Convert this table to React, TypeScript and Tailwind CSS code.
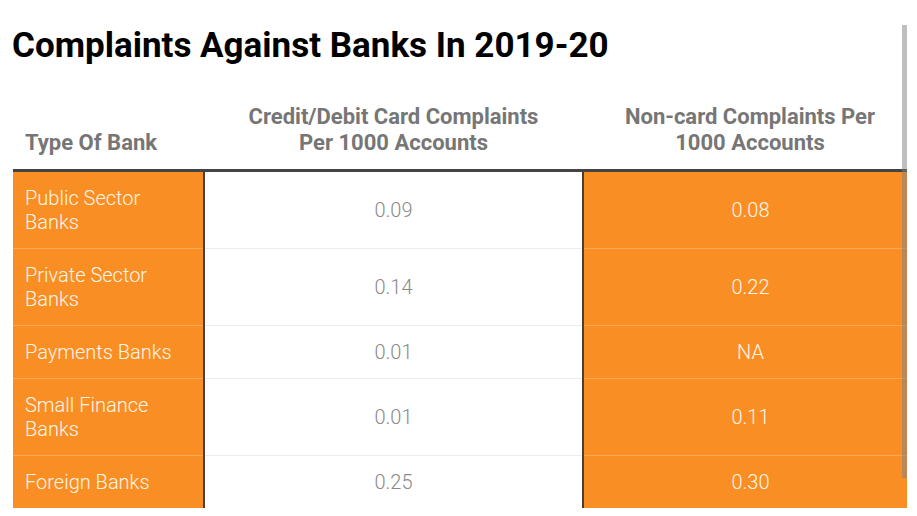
import React from 'react';

const ROWS = [
  { bank: 'Public Sector Banks', card: '0.09', nonCard: '0.08' },
  { bank: 'Private Sector Banks', card: '0.14', nonCard: '0.22' },
  { bank: 'Payments Banks', card: '0.01', nonCard: 'NA' },
  { bank: 'Small Finance Banks', card: '0.01', nonCard: '0.11' },
  { bank: 'Foreign Banks', card: '0.25', nonCard: '0.30' },
];

const TH = 'px-3 pb-[13px] align-bottom text-[22px] font-bold leading-[26px] text-[#767676]';
const TD = 'border-t border-[#ececec] py-[14px] text-[20px] font-light leading-[24px]';

export default function App() {
  return (
    <div className="relative h-[516px] w-[917px] overflow-hidden bg-white font-['Roboto',sans-serif]">
      <h1 className="pl-[12px] pt-[26px] text-[35px] font-bold leading-[40px] text-black">
        Complaints Against Banks In 2019-20
      </h1>

      <div className="ml-[13px] mt-[38px] w-[894px] overflow-hidden">
        <table className="w-[904px] table-fixed border-collapse">
          <colgroup>
            <col className="w-[191px]" />
            <col className="w-[379px]" />
            <col className="w-[334px]" />
          </colgroup>
          <thead>
            <tr className="border-b-[3px] border-[#444]">
              <th className={`${TH} text-left`}>Type Of Bank</th>
              <th className={`${TH} text-center`}>
                Credit/Debit Card Complaints
                <br />
                Per 1000 Accounts
              </th>
              <th className={`${TH} text-center`}>
                Non-card Complaints Per
                <br />
                1000 Accounts
              </th>
            </tr>
          </thead>
          <tbody>
            {ROWS.map((r, i) => (
              <tr key={r.bank}>
                <td
                  className={`${TD} border-r-2 border-r-[#4b3f33] bg-[#f98e25] px-3 pr-6 text-left text-[#fff6e8] ${
                    i === 0 ? 'border-t-0' : 'border-t-[#fba859]'
                  }`}
                >
                  {r.bank}
                </td>
                <td className={`${TD} border-r-2 border-r-[#4b3f33] bg-white text-center text-[#8a8a8a] ${i === 0 ? 'border-t-0' : ''}`}>
                  {r.card}
                </td>
                <td
                  className={`${TD} bg-[#f98e25] text-center text-[#fff6e8] ${
                    i === 0 ? 'border-t-0' : 'border-t-[#fba859]'
                  }`}
                >
                  {r.nonCard}
                </td>
              </tr>
            ))}
          </tbody>
        </table>
      </div>

      {/* scrollbar thumb over the table's right edge */}
      <div className="absolute left-[902px] top-[25px] h-[453px] w-[5px] bg-[#808080]/50" />
    </div>
  );
}
